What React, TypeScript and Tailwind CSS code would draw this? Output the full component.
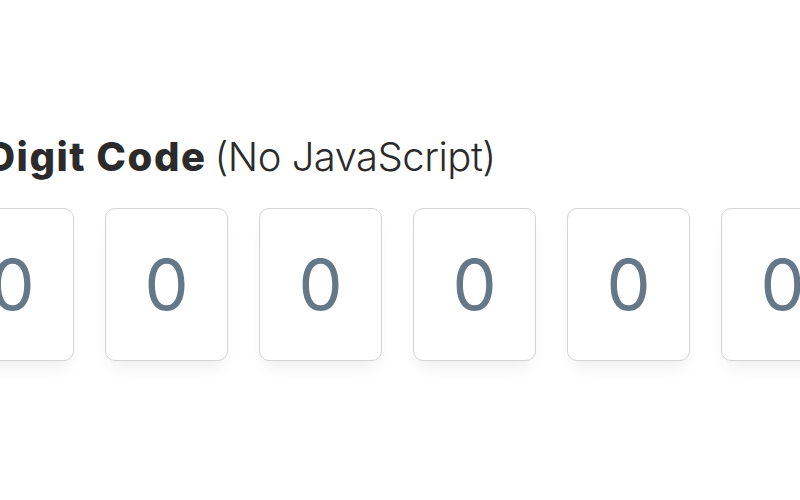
import React from "react";

export default function App() {
  const digits = [0, 1, 2, 3, 4, 5];
  return (
    <div className="w-[800px] h-[500px] bg-white overflow-hidden" style={{ fontFamily: "Inter, 'Noto Sans', sans-serif" }}>
      <div className="ml-[-48px] pt-[133px] flex flex-col">
        <h1 className="text-[40px] leading-[48px] text-[#2b2b2b] whitespace-nowrap">
          <span className="inline-block ml-[-4px] font-extrabold tracking-[1.5px]">6 Digit Code</span>
          <span className="inline-block ml-[8px] font-light tracking-[-0.5px]">(No JavaScript)</span>
        </h1>
        <div className="mt-[27px] ml-[-1px] flex gap-[31px]">
          {digits.map((d) => (
            <div
              key={d}
              className="w-[123px] h-[153px] shrink-0 rounded-[10px] border border-[#d4d4d4] bg-white flex items-center justify-center text-[70px] font-normal text-[#64788a] shadow-[0_12px_16px_-6px_rgba(0,0,0,0.07)]"
            >
              0
            </div>
          ))}
        </div>
      </div>
    </div>
  );
}
